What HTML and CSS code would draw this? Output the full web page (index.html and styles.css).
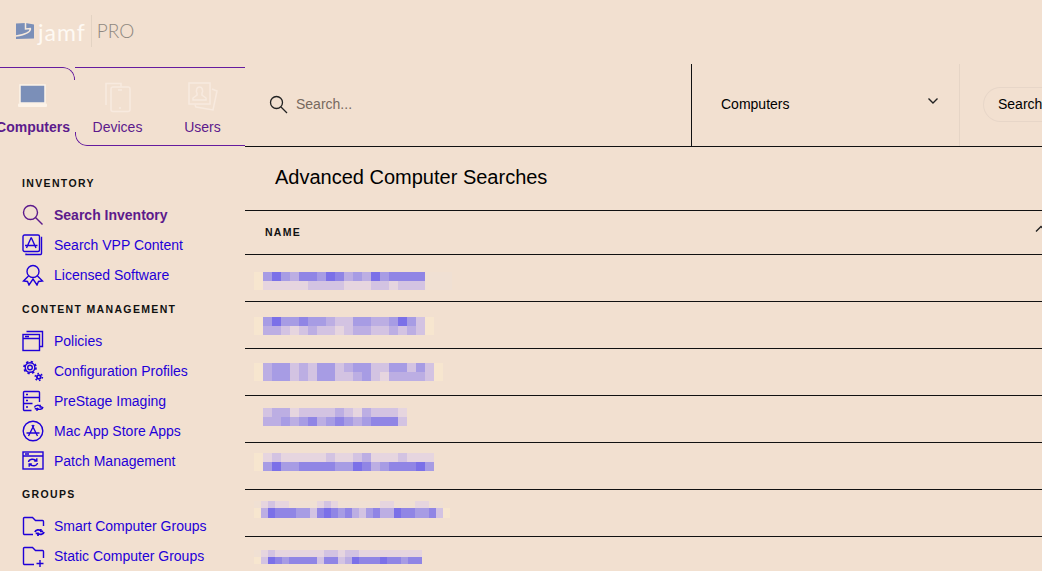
FILE: index.html
```html
<!DOCTYPE html>
<html lang="en">
<head>
<meta charset="utf-8">
<title>Advanced Computer Searches</title>
<link rel="stylesheet" href="styles.css">
</head>
<body>
<div class="page">
  <header class="brand">
    <svg class="brand-mark" width="20" height="18" viewBox="0 0 20 18"><path fill="#7b8fb8" d="M1 1.500l9.500-.5 8.500 1.500V16.500l-18 .5z"/><path fill="none" stroke="#f6e9dc" stroke-width="1.500" d="M10.500 0v7l5.500-.5M15.500 6.500c0 3.500-4 6-14.500 7.500"/></svg>
    <span class="brand-name">jamf</span>
    <span class="brand-pro">PRO</span>
  </header>
  <div class="shell">
    <aside class="sidebar">
      <div class="tabs">
        <a class="tab tab-active">
          <svg width="32" height="26" viewBox="0 0 32 26"><rect x="3" y="2" width="25" height="18" fill="#7b8fb8" stroke="#fdf3e8" stroke-width="1.500"/><rect x="1" y="20.500" width="29" height="3.500" rx="1" fill="#fdf3e8"/></svg>
          <span>Computers</span>
        </a>
        <div class="tabs-rest">
          <a class="tab">
            <svg width="32" height="32" viewBox="0 0 32 32" fill="none" stroke="#f8eadf" stroke-width="1.500"><path d="M4 24V2.500h15v3"/><rect x="9" y="6" width="19" height="24.500" rx="2"/><path d="M16 9h4M17 27h2"/></svg>
            <span>Devices</span>
          </a>
          <a class="tab">
            <svg width="32" height="32" viewBox="0 0 32 32" fill="none" stroke="#f8eadf" stroke-width="1.500"><rect x="2" y="2" width="21" height="21"/><path d="M6 19h13v-2l-4-3v-2c1-1 1-6-2.500-6S9 11 10 12v2l-4 3z"/><path d="M25 8l5 2-4 19-17-3-1-2"/></svg>
            <span>Users</span>
          </a>
        </div>
      </div>
      <nav class="nav">
        <h2 class="nav-title nav-title-first">INVENTORY</h2>
        <a class="nav-item nav-current">
          <svg class="ico" width="22" height="22" viewBox="0 0 22 22"><circle cx="8.500" cy="8.500" r="7"/><path d="M13.500 13.500l7 7"/></svg>
          Search Inventory</a>
        <a class="nav-item">
          <svg class="ico" width="22" height="22" viewBox="0 0 22 22"><rect x="1" y="1" width="16.500" height="16.500" rx="1.500"/><path d="M19 3.500h.5v16a1 1 0 0 1-1 1H4v-1"/><path d="M9.200 3.500l4.800 10.500M9.200 3.500L4.500 14M3 11.500h12.500"/></svg>
          Search VPP Content</a>
        <a class="nav-item">
          <svg class="ico" width="22" height="22" viewBox="0 0 22 22"><circle cx="11" cy="7.500" r="6"/><path d="M6.500 12L1.500 17l4 .5 1.500 3.500 4-6 4 6 1.500-3.500 4-.5-5-5"/></svg>
          Licensed Software</a>
        <h2 class="nav-title">CONTENT MANAGEMENT</h2>
        <a class="nav-item">
          <svg class="ico" width="22" height="22" viewBox="0 0 22 22"><rect x="1" y="4.500" width="16.500" height="16"/><path d="M1 8.500h16.500M4.500 1.500h16v15h-3M3 6.500h4" /></svg>
          Policies</a>
        <a class="nav-item">
          <svg class="ico" width="22" height="22" viewBox="0 0 22 22"><circle cx="8" cy="7.500" r="2.300"/><circle cx="8" cy="7.500" r="4.800"/><circle cx="8" cy="7.500" r="6" stroke-width="1.700" stroke-dasharray="2.300 2.410"/><circle cx="16.800" cy="17" r="1.900" stroke-width="1.800"/><circle cx="16.800" cy="17" r="3.600" stroke-width="1.500" stroke-dasharray="1.600 2.170"/></svg>
          Configuration Profiles</a>
        <a class="nav-item">
          <svg class="ico" width="22" height="22" viewBox="0 0 22 22"><path d="M9.500 20.500H2.500a1 1 0 0 1-1-1V2.500a1 1 0 0 1 1-1h14a1 1 0 0 1 1 1V12M1.500 7.500h16M1.500 13.500h9M4 4.500h2M4 10.500h2M4 17h2"/><path d="M12.500 17.500c.5-2.500 4.500-3 6-.8M21 17c-.5 2.500-4.500 3.300-6.200 1M18.200 14.800v2.200h2.200M15 21v-2.300h-2.200"/></svg>
          PreStage Imaging</a>
        <a class="nav-item">
          <svg class="ico" width="22" height="22" viewBox="0 0 22 22"><circle cx="11" cy="11" r="9.800"/><path d="M10 5l5.500 11M12 5L6.500 16M4.500 13h13"/></svg>
          Mac App Store Apps</a>
        <a class="nav-item">
          <svg class="ico" width="22" height="22" viewBox="0 0 22 22"><rect x="1" y="2" width="20" height="17"/><path d="M1 6h20M3 4h4"/><path d="M6.500 12c.5-3 5.500-4 8-1M15.500 13c-.5 3-5.500 4-8 1M14.800 8.300V11h-2.600M7.200 16.700V14h2.600"/></svg>
          Patch Management</a>
        <h2 class="nav-title nav-title-groups">GROUPS</h2>
        <a class="nav-item">
          <svg class="ico ico-wide" width="24" height="22" viewBox="0 0 24 22"><path d="M11 19.500H2.500a1 1 0 0 1-1-1V3.500a1 1 0 0 1 1-1h8l3 3h7a1 1 0 0 1 1 1V11"/><path stroke-width="1.800" d="M13 17c.5-2.500 4.500-3 6.500-.8M22 17c-.5 2.500-4.500 3.300-6.500 1M18.800 14v2.400h2.300M16 21v-2.600h-2.300"/></svg>
          Smart Computer Groups</a>
        <a class="nav-item">
          <svg class="ico ico-wide" width="24" height="22" viewBox="0 0 24 22"><path d="M12 19.500H2.500a1 1 0 0 1-1-1V3.500a1 1 0 0 1 1-1h8l3 3h7a1 1 0 0 1 1 1V13"/><path d="M18 15v7M14.500 18.500h7"/></svg>
          Static Computer Groups</a>
      </nav>
    </aside>
    <main class="content">
      <div class="toolbar">
        <div class="search-field">
          <svg class="search-ico" width="19" height="19" viewBox="0 0 19 19"><circle cx="7.500" cy="7.500" r="6"/><path d="M12 12l6 6"/></svg>
          <span>Search...</span>
        </div>
        <div class="select">
          <span>Computers</span>
          <svg width="12" height="8" viewBox="0 0 12 8"><path d="M1.500 1.500L6 6l4.500-4.500"/></svg>
        </div>
        <div class="actions"><span class="btn">Search</span></div>
      </div>
      <h1 class="title">Advanced Computer Searches</h1>
      <div class="thead">
        <span>NAME</span>
        <svg class="caret" width="12" height="8" viewBox="0 0 12 8"><path d="M1 6.500L6 1.500l5 5"/></svg>
      </div>
      <div class="row"><div class="mosaic mo1">
        <div class="strip"><i class="g"></i><i class="d"></i><i class="f"></i><i class="d"></i><i class="c"></i><i class="e"></i><i class="e"></i><i class="d"></i><i class="f"></i><i class="e"></i><i class="c"></i><i class="d"></i><i class="c"></i><i class="f"></i><i class="d"></i><i class="e"></i><i class="e"></i><i class="e"></i><i class="e"></i><i class="h"></i><i class="h"></i><i class="h"></i></div>
        <div class="strip"><i class="g"></i><i class="a"></i><i class="a"></i><i class="a"></i><i class="a"></i><i class="a"></i><i class="b"></i><i class="b"></i><i class="b"></i><i class="b"></i><i class="a"></i><i class="a"></i><i class="a"></i><i class="b"></i><i class="b"></i><i class="a"></i><i class="b"></i><i class="b"></i><i class="b"></i><i class="h"></i><i class="h"></i><i class="h"></i></div>
      </div></div>
      <div class="row"><div class="mosaic mo2">
        <div class="strip"><i class="g"></i><i class="d"></i><i class="f"></i><i class="d"></i><i class="d"></i><i class="e"></i><i class="d"></i><i class="d"></i><i class="c"></i><i class="b"></i><i class="b"></i><i class="d"></i><i class="d"></i><i class="c"></i><i class="c"></i><i class="d"></i><i class="f"></i><i class="d"></i><i class="b"></i><i class="g"></i></div>
        <div class="strip"><i class="g"></i><i class="c"></i><i class="c"></i><i class="b"></i><i class="a"></i><i class="b"></i><i class="c"></i><i class="b"></i><i class="b"></i><i class="a"></i><i class="b"></i><i class="c"></i><i class="c"></i><i class="b"></i><i class="b"></i><i class="c"></i><i class="b"></i><i class="c"></i><i class="b"></i><i class="g"></i></div>
      </div></div>
      <div class="row"><div class="mosaic mo3">
        <div class="strip"><i class="g"></i><i class="c"></i><i class="d"></i><i class="d"></i><i class="b"></i><i class="c"></i><i class="b"></i><i class="d"></i><i class="d"></i><i class="b"></i><i class="c"></i><i class="d"></i><i class="d"></i><i class="b"></i><i class="b"></i><i class="d"></i><i class="d"></i><i class="b"></i><i class="d"></i><i class="b"></i><i class="g"></i></div>
        <div class="strip"><i class="g"></i><i class="c"></i><i class="d"></i><i class="d"></i><i class="b"></i><i class="c"></i><i class="b"></i><i class="d"></i><i class="d"></i><i class="b"></i><i class="b"></i><i class="c"></i><i class="d"></i><i class="b"></i><i class="a"></i><i class="c"></i><i class="c"></i><i class="c"></i><i class="c"></i><i class="b"></i><i class="g"></i></div>
      </div></div>
      <div class="row"><div class="mosaic mo4">
        <div class="strip"><i class="n"></i><i class="b"></i><i class="c"></i><i class="c"></i><i class="a"></i><i class="b"></i><i class="b"></i><i class="b"></i><i class="b"></i><i class="c"></i><i class="b"></i><i class="a"></i><i class="c"></i><i class="b"></i><i class="b"></i><i class="b"></i><i class="a"></i></div>
        <div class="strip"><i class="n"></i><i class="c"></i><i class="c"></i><i class="d"></i><i class="c"></i><i class="d"></i><i class="e"></i><i class="c"></i><i class="d"></i><i class="e"></i><i class="d"></i><i class="c"></i><i class="d"></i><i class="e"></i><i class="e"></i><i class="e"></i><i class="b"></i></div>
      </div></div>
      <div class="row"><div class="mosaic mo5">
        <div class="strip"><i class="g"></i><i class="a"></i><i class="b"></i><i class="a"></i><i class="a"></i><i class="a"></i><i class="a"></i><i class="a"></i><i class="b"></i><i class="a"></i><i class="a"></i><i class="b"></i><i class="c"></i><i class="a"></i><i class="a"></i><i class="a"></i><i class="b"></i><i class="a"></i><i class="a"></i><i class="a"></i></div>
        <div class="strip"><i class="g"></i><i class="d"></i><i class="f"></i><i class="d"></i><i class="d"></i><i class="e"></i><i class="e"></i><i class="e"></i><i class="e"></i><i class="d"></i><i class="d"></i><i class="f"></i><i class="e"></i><i class="c"></i><i class="d"></i><i class="e"></i><i class="e"></i><i class="e"></i><i class="f"></i><i class="d"></i></div>
      </div></div>
      <div class="row"><div class="mosaic mo6">
        <div class="strip strip-fine"><i class="h"></i><i class="a"></i><i class="b"></i><i class="a"></i><i class="a"></i><i class="h"></i><i class="h"></i><i class="h"></i><i class="h"></i><i class="a"></i><i class="b"></i><i class="a"></i><i class="h"></i><i class="h"></i><i class="h"></i><i class="h"></i><i class="h"></i><i class="h"></i><i class="a"></i><i class="a"></i><i class="h"></i><i class="h"></i><i class="h"></i><i class="a"></i><i class="a"></i><i class="h"></i><i class="h"></i></div>
        <div class="strip strip-fine strip-tall"><i class="g"></i><i class="c"></i><i class="f"></i><i class="e"></i><i class="e"></i><i class="e"></i><i class="d"></i><i class="d"></i><i class="b"></i><i class="e"></i><i class="f"></i><i class="e"></i><i class="d"></i><i class="e"></i><i class="c"></i><i class="b"></i><i class="d"></i><i class="e"></i><i class="c"></i><i class="c"></i><i class="f"></i><i class="e"></i><i class="e"></i><i class="d"></i><i class="d"></i><i class="e"></i><i class="b"></i><i class="g"></i></div>
      </div></div>
      <div class="row"><div class="mosaic mo7">
        <div class="strip strip-fine"><i class="h"></i><i class="a"></i><i class="b"></i><i class="a"></i><i class="a"></i><i class="a"></i><i class="a"></i><i class="a"></i><i class="a"></i><i class="a"></i><i class="b"></i><i class="b"></i><i class="a"></i><i class="b"></i><i class="b"></i><i class="a"></i><i class="a"></i><i class="a"></i><i class="a"></i><i class="a"></i><i class="a"></i><i class="a"></i><i class="a"></i><i class="a"></i></div>
        <div class="strip strip-fine"><i class="g"></i><i class="b"></i><i class="f"></i><i class="e"></i><i class="d"></i><i class="e"></i><i class="e"></i><i class="e"></i><i class="e"></i><i class="b"></i><i class="e"></i><i class="e"></i><i class="b"></i><i class="c"></i><i class="f"></i><i class="e"></i><i class="e"></i><i class="e"></i><i class="f"></i><i class="e"></i><i class="e"></i><i class="d"></i><i class="e"></i><i class="e"></i></div>
      </div></div>
    </main>
  </div>
</div>
</body>
</html>
```
FILE: styles.css
```css
* { box-sizing: border-box; }
html, body { margin: 0; height: 100%; overflow: hidden; }
body {
  background: #f2e0d0;
  font-family: "Liberation Sans", Arial, sans-serif;
  font-size: 14px;
  color: #000;
}
.page { width: 1042px; height: 571px; overflow: hidden; }

/* brand */
.brand { height: 67px; display: flex; align-items: flex-start; padding: 15px 0 0 15px; }
.brand-mark { margin-top: 7px; }
.brand-name {
  font-family: Lato, sans-serif; font-weight: 400; font-size: 23px; line-height: 30px;
  letter-spacing: 1px; color: #fef9f3; margin-left: 3px; padding-right: 5px;
  margin-top: 2px;
}
.brand-pro {
  font-family: Lato, sans-serif; font-weight: 300; font-size: 19px; line-height: 32px;
  color: #8f8880; border-left: 1px solid #e3d3c3; padding-left: 5px;
}

.shell { display: flex; height: 504px; }

/* sidebar */
.sidebar { width: 245px; flex: none; }
.tabs { display: flex; height: 79px; color: #5c1a8c; }
.tab {
  width: 85px; flex: none; display: flex; flex-direction: column; align-items: center;
  justify-content: flex-end; padding-bottom: 11px; gap: 6px; line-height: 16px;
}
.tab svg { display: block; }
.tab-active {
  position: relative; width: 75px; padding-right: 9px; padding-bottom: 11px;
  gap: 10px; font-weight: 700; white-space: nowrap;
}
.tab-active::before {
  content: ""; position: absolute; inset: 0 0 0 -2px;
  border-top: 1px solid #651c9e; border-right: 1px solid #651c9e; border-top-right-radius: 12px;
  -webkit-mask-image: linear-gradient(#000 13px, transparent 13px);
  mask-image: linear-gradient(#000 13px, transparent 13px);
}
.tabs-rest { position: relative; display: flex; width: 170px; border-top: 1px solid #651c9e; }
.tabs-rest::before {
  content: ""; position: absolute; inset: -1px 0 0 0;
  border-left: 1px solid #651c9e; border-bottom: 1px solid #651c9e; border-bottom-left-radius: 12px;
  -webkit-mask-image: linear-gradient(transparent 65px, #000 65px);
  mask-image: linear-gradient(transparent 65px, #000 65px);
}
.nav { display: flex; flex-direction: column; padding-left: 22px; }
.nav-title {
  margin: 11px 0 9px; font-size: 10.5px; font-weight: 700; letter-spacing: 1.350px;
  line-height: 16px; height: 16px; color: #111;
}
.nav-title-first { margin-top: 29px; }
.nav-title-groups { margin-top: 10px; }
.nav-item { height: 30px; display: flex; align-items: center; color: #1f00d8; white-space: nowrap; }
.nav-current { color: #5c1a8c; font-weight: 700; }
.ico {
  flex: none; margin-right: 10px; fill: none; stroke: currentColor; stroke-width: 1.400;
}
.ico-wide { margin-right: 8px; }

/* content */
.content { flex: 1; min-width: 0; margin-top: -3px; }
.toolbar { display: flex; height: 83px; border-bottom: 1px solid #111; }
.search-field {
  width: 446px; flex: none; display: flex; align-items: center; padding: 0 0 2px 24px; gap: 8px; color: #77695f;
}
.search-ico { fill: none; stroke: #222; stroke-width: 1.300; }
.select {
  width: 269px; flex: none; display: flex; align-items: center; justify-content: space-between;
  padding: 0 20px 2px 29px; border-left: 1px solid #111; border-right: 1px solid #e6d5c6;
}
.select svg { fill: none; stroke: #222; stroke-width: 1.400; margin-top: -6px; }
.actions { flex: none; display: flex; align-items: center; padding: 0 0 2px 23px; }
.btn {
  display: block; width: 110px; height: 35px; line-height: 33px; border: 1px solid #e7d6c8;
  border-right: 0; border-radius: 18px 0 0 18px; padding-left: 14px;
}
.title {
  margin: 0; height: 64px; padding-left: 30px; font-size: 20px; font-weight: 400; line-height: 60px;
  border-bottom: 1px solid #111;
}
.thead {
  position: relative; height: 44px; border-bottom: 1px solid #111; padding: 0 0 0 20px;
  font-size: 10.5px; font-weight: 700; letter-spacing: 1.250px; line-height: 42px; color: #111;
}
.caret { position: absolute; left: 790px; top: 14px; fill: none; stroke: #222; stroke-width: 1.400; }
.row { height: 47px; border-bottom: 1px solid #111; }
.mosaic { display: flex; flex-direction: column; align-items: flex-start; }
.mo1 { padding: 17px 0 0 9px; }
.mo2 { padding: 15px 0 0 9px; }
.mo3 { padding: 14px 0 0 9px; }
.mo4 { padding: 12px 0 0 9px; }
.mo5 { padding: 10px 0 0 9px; }
.mo6 { padding: 11px 0 0 9px; }
.mo7 { padding: 13px 0 0 9px; }
.strip { display: flex; height: 9px; }
.strip i { display: block; width: 9px; height: 100%; }
.strip-fine { height: 7px; }
.strip-fine i { width: 7px; }
.strip-tall { height: 10px; }
.a { background: #e6d5df; }
.b { background: #d3c3e2; }
.c { background: #bcaee3; }
.d { background: #a79ce4; }
.e { background: #9085e5; }
.f { background: #7b70e8; }
.g { background: #f7e6cf; }
.h { background: #f0e0d3; }
.n { background: transparent; }
```
